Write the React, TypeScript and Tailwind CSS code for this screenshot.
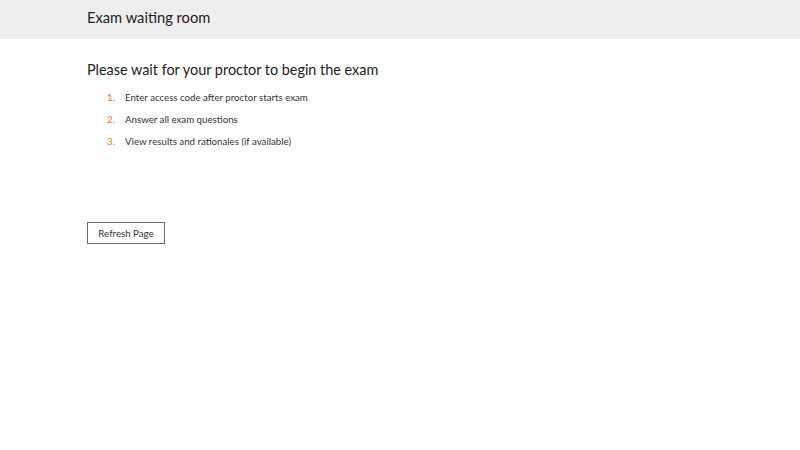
export default function App() {
  const items = [
    "Enter access code after proctor starts exam",
    "Answer all exam questions",
    "View results and rationales (if available)",
  ];
  return (
    <div className="w-[800px] h-[450px] bg-white text-[#2e2e2e]" style={{ fontFamily: "Lato, 'Open Sans', sans-serif" }}>
      <div className="h-[39px] bg-[#eeeeee] pl-[87px] pt-[5px]">
        <span className="text-[14.7px] leading-[20px] text-[#222]">Exam waiting room</span>
      </div>
      <div className="pl-[87px] pt-[20px]">
        <h1 className="text-[14.4px] leading-[22px] text-[#222]">Please wait for your proctor to begin the exam</h1>
        <ol className="mt-[8px] pl-[20px] flex flex-col gap-[6px]">
          {items.map((t, i) => (
            <li key={i} className="flex text-[9.7px] leading-[16px] text-[#333]">
              <span className="w-[18px] text-[#ee7421]">{i + 1}.</span>
              <span>{t}</span>
            </li>
          ))}
        </ol>
        <button className="mt-[73px] h-[22px] w-[78px] border border-[#6b6b6b] text-[9.7px] text-[#333] flex items-center justify-center">
          Refresh Page
        </button>
      </div>
    </div>
  );
}
